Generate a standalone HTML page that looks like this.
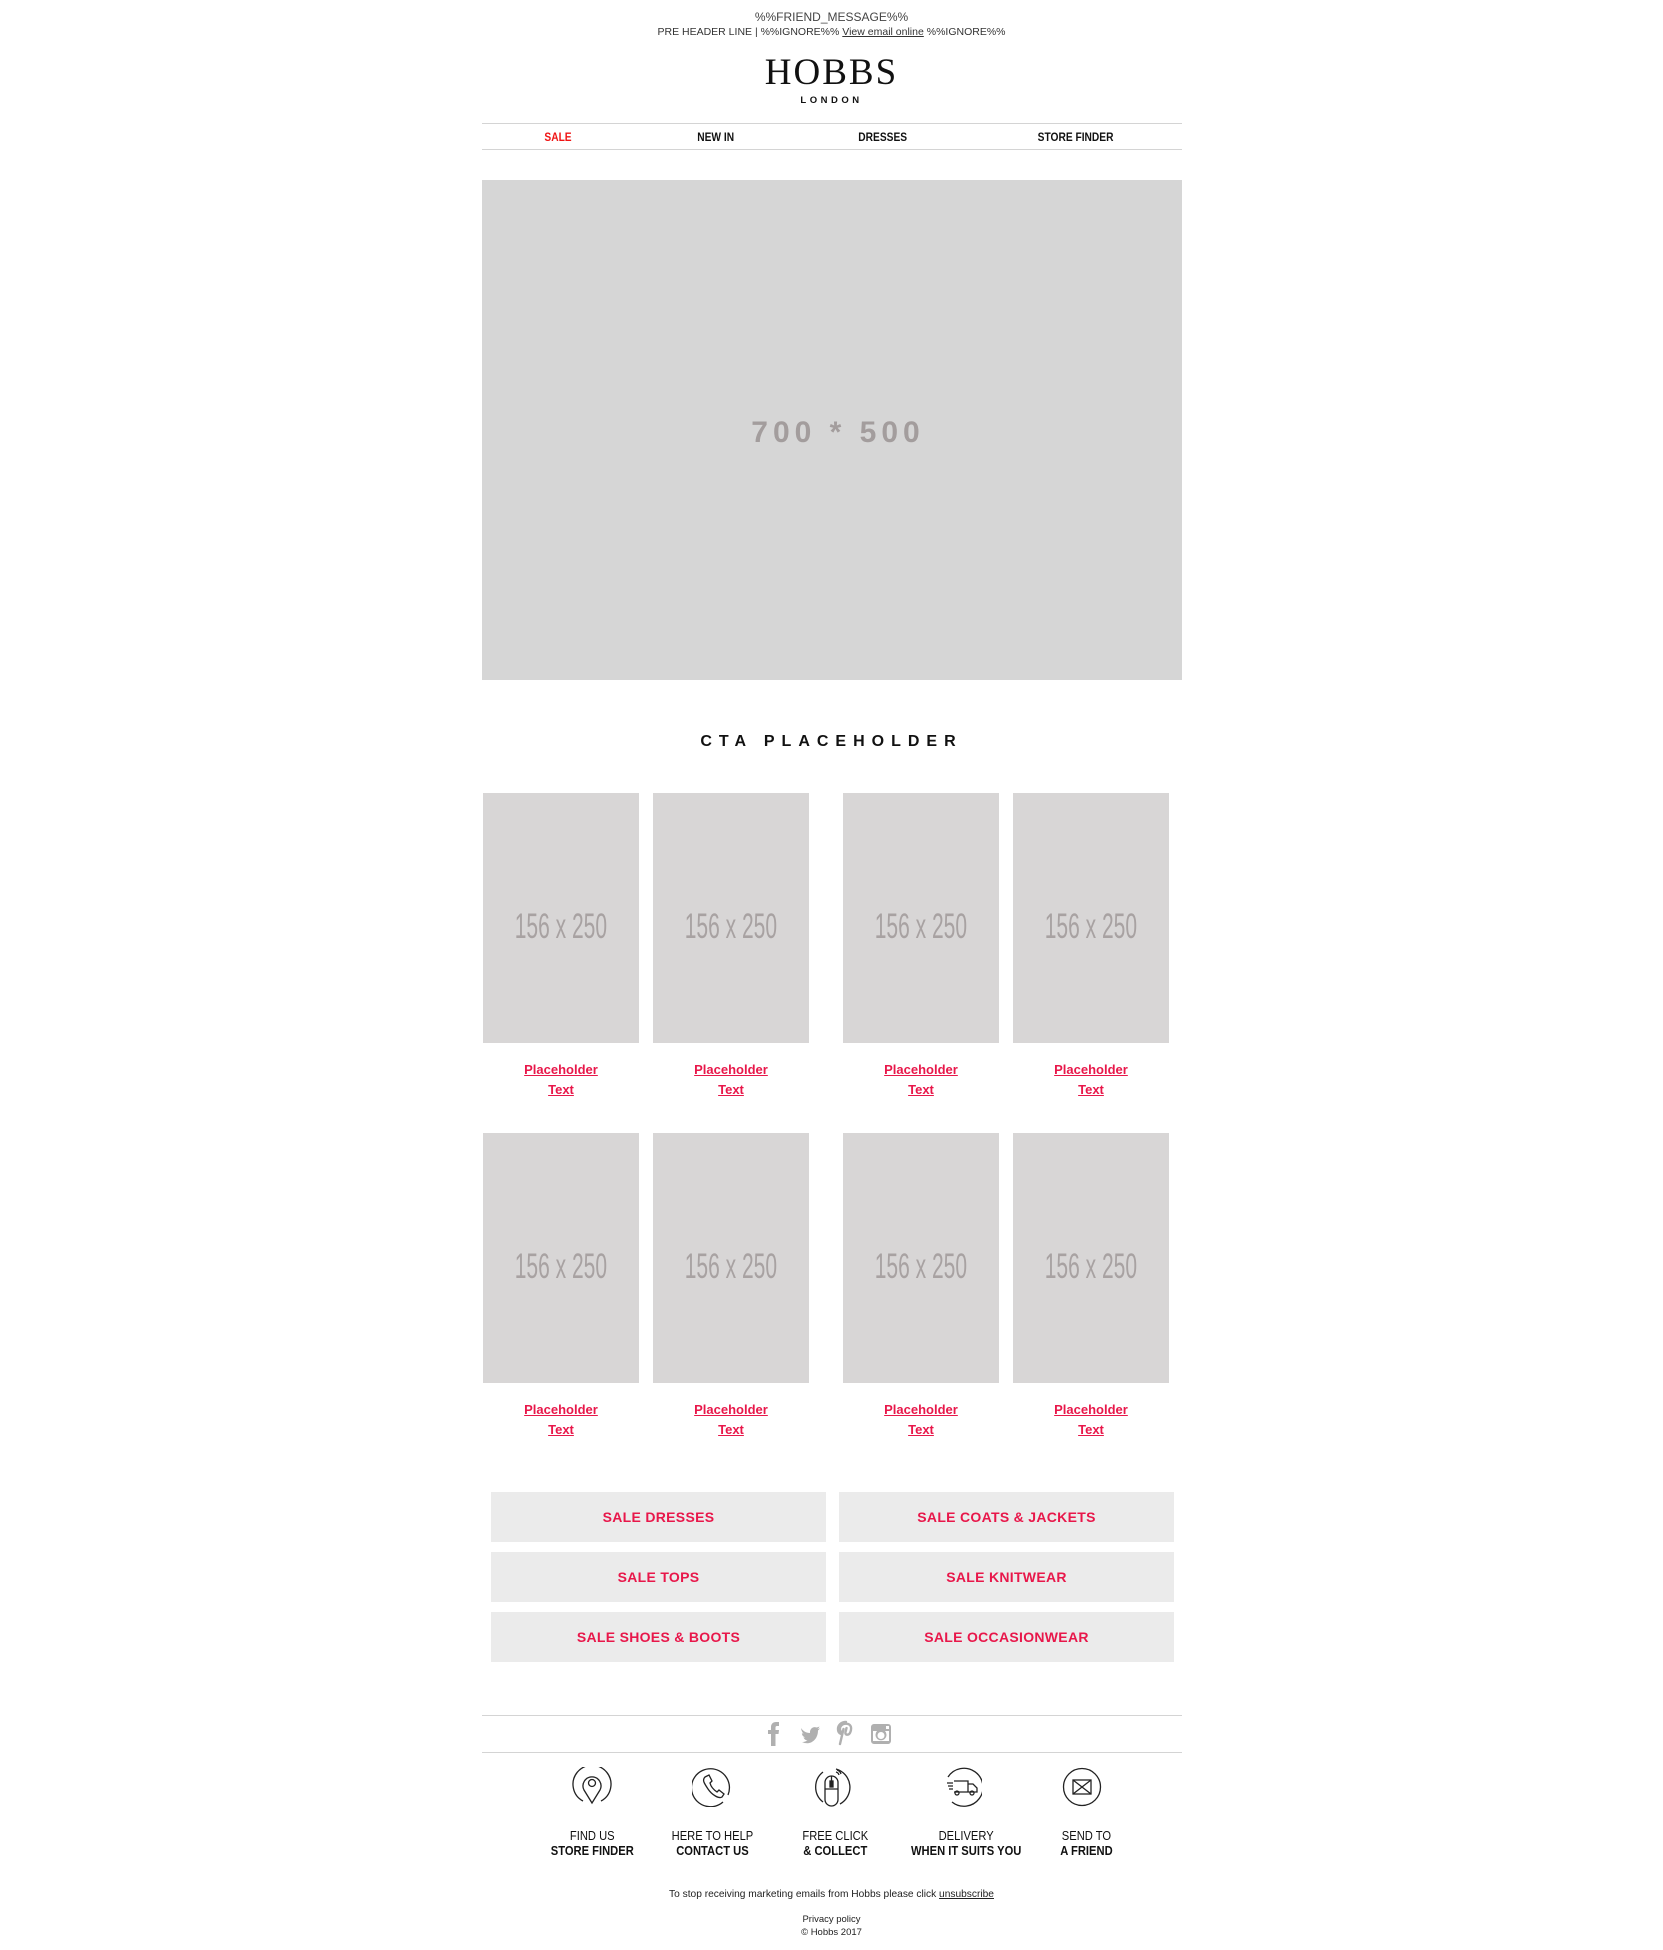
<!DOCTYPE html>
<html><head><meta charset="utf-8"><style>
*{margin:0;padding:0;box-sizing:border-box}
body{width:1663px;height:1950px;background:#fff;position:relative;font-family:"Liberation Sans",Arial,sans-serif;overflow:hidden}
.a{position:absolute}
.c{text-align:center}
.nav{font-weight:bold;font-size:12px;color:#111;top:130px}
.nav span{display:inline-block;transform:scaleX(.85)}
.img{background:#d8d6d6;width:156px;height:250px;color:#a8a2a2;font-size:35px;display:flex;align-items:center;justify-content:center}
.img span{display:inline-block;transform:scaleX(.6);white-space:nowrap;position:relative;top:9px}
.lab{width:156px;text-align:center;font-weight:bold;font-size:13px;color:#e8174a;text-decoration:underline;line-height:20px}
.btn{background:#ebebeb;width:335px;height:50px;color:#e8174a;font-weight:bold;font-size:14px;display:flex;align-items:center;justify-content:center;letter-spacing:.3px}
.ic{width:140px;text-align:center;font-size:13px;color:#111;line-height:15px}
.ic span{display:inline-block;transform:scaleX(.86)}
</style></head><body>
<div class="a c" style="left:0;width:1663px;top:10px;font-size:12px;color:#444">%%FRIEND_MESSAGE%%</div>
<div class="a c" style="left:0;width:1663px;top:26px;font-size:10.5px;color:#333">PRE HEADER LINE | %%IGNORE%% <u>View email online</u> %%IGNORE%%</div>
<div class="a c" style="left:0;width:1663px;top:52px;font-family:'Liberation Serif',serif;font-size:37px;letter-spacing:2px;color:#111;line-height:42px">HOBBS</div>
<div class="a c" style="left:0;width:1663px;top:95px;font-size:9.5px;letter-spacing:3.5px;color:#111;font-weight:bold">LONDON</div>
<div class="a" style="left:482px;width:700px;top:123px;height:1px;background:#d4d4d4"></div>
<div class="a" style="left:482px;width:700px;top:149px;height:1px;background:#d4d4d4"></div>
<div class="a nav c" style="left:508px;width:100px;color:#f01414"><span>SALE</span></div>
<div class="a nav c" style="left:666px;width:100px"><span>NEW IN</span></div>
<div class="a nav c" style="left:833px;width:100px"><span>DRESSES</span></div>
<div class="a nav c" style="left:1006px;width:140px"><span>STORE FINDER</span></div>
<div class="a" style="left:482px;top:180px;width:700px;height:500px;background:#d6d6d6;display:flex;align-items:center;justify-content:center;color:#a39d9d;font-size:30px;letter-spacing:5px;font-weight:bold"><span style="position:relative;left:6px;top:3px">700 * 500</span></div>
<div class="a c" style="left:0;width:1663px;top:733px;font-size:16px;font-weight:bold;letter-spacing:7px;color:#111">CTA PLACEHOLDER</div>

<div class="a img" style="left:483px;top:793px"><span>156 x 250</span></div>
<div class="a img" style="left:653px;top:793px"><span>156 x 250</span></div>
<div class="a img" style="left:843px;top:793px"><span>156 x 250</span></div>
<div class="a img" style="left:1013px;top:793px"><span>156 x 250</span></div>
<div class="a lab" style="left:483px;top:1060px">Placeholder<br>Text</div>
<div class="a lab" style="left:653px;top:1060px">Placeholder<br>Text</div>
<div class="a lab" style="left:843px;top:1060px">Placeholder<br>Text</div>
<div class="a lab" style="left:1013px;top:1060px">Placeholder<br>Text</div>

<div class="a img" style="left:483px;top:1133px"><span>156 x 250</span></div>
<div class="a img" style="left:653px;top:1133px"><span>156 x 250</span></div>
<div class="a img" style="left:843px;top:1133px"><span>156 x 250</span></div>
<div class="a img" style="left:1013px;top:1133px"><span>156 x 250</span></div>
<div class="a lab" style="left:483px;top:1400px">Placeholder<br>Text</div>
<div class="a lab" style="left:653px;top:1400px">Placeholder<br>Text</div>
<div class="a lab" style="left:843px;top:1400px">Placeholder<br>Text</div>
<div class="a lab" style="left:1013px;top:1400px">Placeholder<br>Text</div>

<div class="a btn" style="left:491px;top:1492px">SALE DRESSES</div>
<div class="a btn" style="left:839px;top:1492px">SALE COATS &amp; JACKETS</div>
<div class="a btn" style="left:491px;top:1552px">SALE TOPS</div>
<div class="a btn" style="left:839px;top:1552px">SALE KNITWEAR</div>
<div class="a btn" style="left:491px;top:1612px">SALE SHOES &amp; BOOTS</div>
<div class="a btn" style="left:839px;top:1612px">SALE OCCASIONWEAR</div>

<div class="a" style="left:482px;width:700px;top:1715px;height:1px;background:#d4d4d4"></div>
<div class="a" style="left:482px;width:700px;top:1752px;height:1px;background:#d4d4d4"></div>
<svg class="a" style="left:750px;top:1720px" width="150" height="30" viewBox="0 0 150 30" fill="#b0b0b0">
<path d="M21 26V14h-3v-4h3V7c0-3 2-5 5-5h3v4h-2c-1 0-1.5.5-1.5 1.5V10h3.5l-.5 4h-3v12z"/>
<path d="M51 8c2 3 5 5 9 5-.5-4 3-7 6.5-5.5 1-.2 2-.6 3-1-.4 1-1 1.8-2 2.5 1-.1 1.8-.4 2.5-.7-.6 1-1.3 1.6-2 2.2C68 20 60 26 52 22c2 .2 4-.5 5.5-1.6-2 0-3.3-1.3-4-3 .6.1 1.2.1 1.8-.1-2-.4-3.4-2.2-3.4-4.2.6.3 1.2.5 1.8.5-1.8-1.3-2.4-3.7-2.7-5.6z"/>
<path d="M96 2c-5 0-8 3.4-8 7 0 2.5 1 4 2.5 4.7l.8-1.5c-1-1-1.4-2-1.4-3.2 0-3 2.4-5.3 6-5.3 3.3 0 5.2 2 5.2 4.7 0 3.4-1.5 6.3-3.8 6.3-1.3 0-2.2-1-1.9-2.3l1.1-4.3M93.5 9l-3.5 15" fill="none" stroke="#b0b0b0" stroke-width="2.4" stroke-linecap="round"/>
<path d="M124 4h14a3 3 0 013 3v14a3 3 0 01-3 3h-14a3 3 0 01-3-3V7a3 3 0 013-3zm-1 7v10h16V11h-4a5.5 5.5 0 11-8 0zm8 1a3.5 3.5 0 100 7 3.5 3.5 0 000-7zm5-6v3h3V6z"/>
</svg>

<svg class="a" style="left:572px;top:1767px" width="40" height="40" viewBox="0 0 40 40" fill="none" stroke="#222" stroke-width="1.3">
<path d="M11 34A19 19 0 1129 34"/><path d="M20 36l-8-13a9 9 0 1116 0z"/><circle cx="20" cy="16" r="3.5"/></svg>
<svg class="a" style="left:692px;top:1767px" width="40" height="40" viewBox="0 0 40 40" fill="none" stroke="#222" stroke-width="1.3">
<path d="M31 35A19 19 0 1136 28"/><path d="M13 10l4-2 3 6-2 2c1 4 4 7 7 9l2-2 5 4-2 3c-3 2-10-2-14-8S10 13 13 10z"/></svg>
<svg class="a" style="left:812px;top:1767px" width="40" height="40" viewBox="0 0 40 40" fill="none" stroke="#222" stroke-width="1.3">
<path d="M11 5A19 19 0 0011 35"/><path d="M24 2A19 19 0 0128 37"/><rect x="13" y="9" width="13" height="30" rx="6.5"/><path d="M13 22h13M19.5 9v6"/><rect x="18" y="14" width="3" height="6" fill="#222"/><path d="M24 5a4 4 0 013 3M25 3a6 6 0 014 4"/></svg>
<svg class="a" style="left:942px;top:1767px" width="40" height="40" viewBox="0 0 40 40" fill="none" stroke="#222" stroke-width="1.3">
<path d="M6 10A19 19 0 1110 35"/><path d="M12 14h14v11H12M26 17h5l4 4v4h-9"/><circle cx="15" cy="26" r="2"/><circle cx="30" cy="26" r="2"/><path d="M5 16h6M6 19h5M7 22h4"/></svg>
<svg class="a" style="left:1062px;top:1767px" width="40" height="40" viewBox="0 0 40 40" fill="none" stroke="#222" stroke-width="1.3">
<circle cx="20" cy="20" r="18.5"/><rect x="11" y="13" width="18" height="14"/><path d="M11 13l18 14M29 13L11 27"/></svg>

<div class="a ic" style="left:522px;top:1828px"><span>FIND US<br><b>STORE FINDER</b></span></div>
<div class="a ic" style="left:642px;top:1828px"><span>HERE TO HELP<br><b>CONTACT US</b></span></div>
<div class="a ic" style="left:765px;top:1828px"><span>FREE CLICK<br><b>&amp; COLLECT</b></span></div>
<div class="a ic" style="left:896px;top:1828px"><span>DELIVERY<br><b>WHEN IT SUITS YOU</b></span></div>
<div class="a ic" style="left:1016px;top:1828px"><span>SEND TO<br><b>A FRIEND</b></span></div>

<div class="a c" style="left:0;width:1663px;top:1888px;font-size:10.5px;color:#222;transform:scaleX(.97)">To stop receiving marketing emails from Hobbs please click <u>unsubscribe</u></div>
<div class="a c" style="left:0;width:1663px;top:1914px;font-size:9.5px;color:#222">Privacy policy</div>
<div class="a c" style="left:0;width:1663px;top:1927px;font-size:9.5px;color:#222">© Hobbs 2017</div>
</body></html>
